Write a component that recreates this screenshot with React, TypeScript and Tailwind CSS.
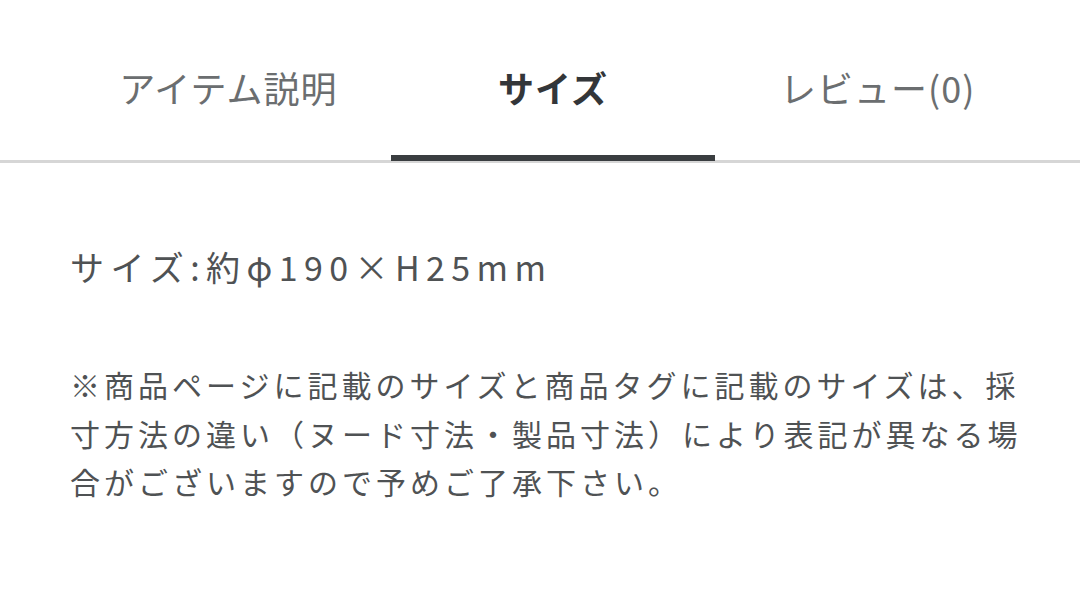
import { useState } from 'react';

const tabs = ['アイテム説明', 'サイズ', 'レビュー(0)'];

export default function App() {
  const [active, setActive] = useState(1);

  return (
    <div className="w-[1080px] h-[592px] bg-white overflow-hidden" style={{ fontFamily: '"Noto Sans CJK JP", "Noto Sans", sans-serif' }}>
      {/* Tabs */}
      <div className="border-b-[3px] border-[#d6d6d6]">
        <div className="grid grid-cols-3 pl-[66px] pr-[40px] pt-[14px]">
          {tabs.map((t, i) => (
            <button
              key={t}
              onClick={() => setActive(i)}
              className="relative h-[146px] flex items-center justify-center"
            >
              <span
                className={
                  i === active
                    ? 'text-[36px] font-bold text-[#333639] tracking-[1px]'
                    : 'text-[36px] text-[#6b6e70] tracking-[1px]'
                }
              >
                {t}
              </span>
              {i === active && <div className="absolute left-0 right-0 bottom-[-1px] h-[6px] bg-[#3a3d40]" />}
            </button>
          ))}
        </div>
      </div>

      {/* Body */}
      <div className="pl-[70px] pr-[40px] text-[#4f5254]">
        <p className="mt-[78px] text-[34px] tracking-[6.4px] leading-[52px]">サイズ:約φ190×H25mm</p>
        <p className="mt-[67px] text-[30px] tracking-[4px] leading-[48.5px]">
          ※商品ページに記載のサイズと商品タグに記載のサイズは、採寸方法の違い（ヌード寸法・製品寸法）により表記が異なる場合がございますので予めご了承下さい。
        </p>
      </div>
    </div>
  );
}
